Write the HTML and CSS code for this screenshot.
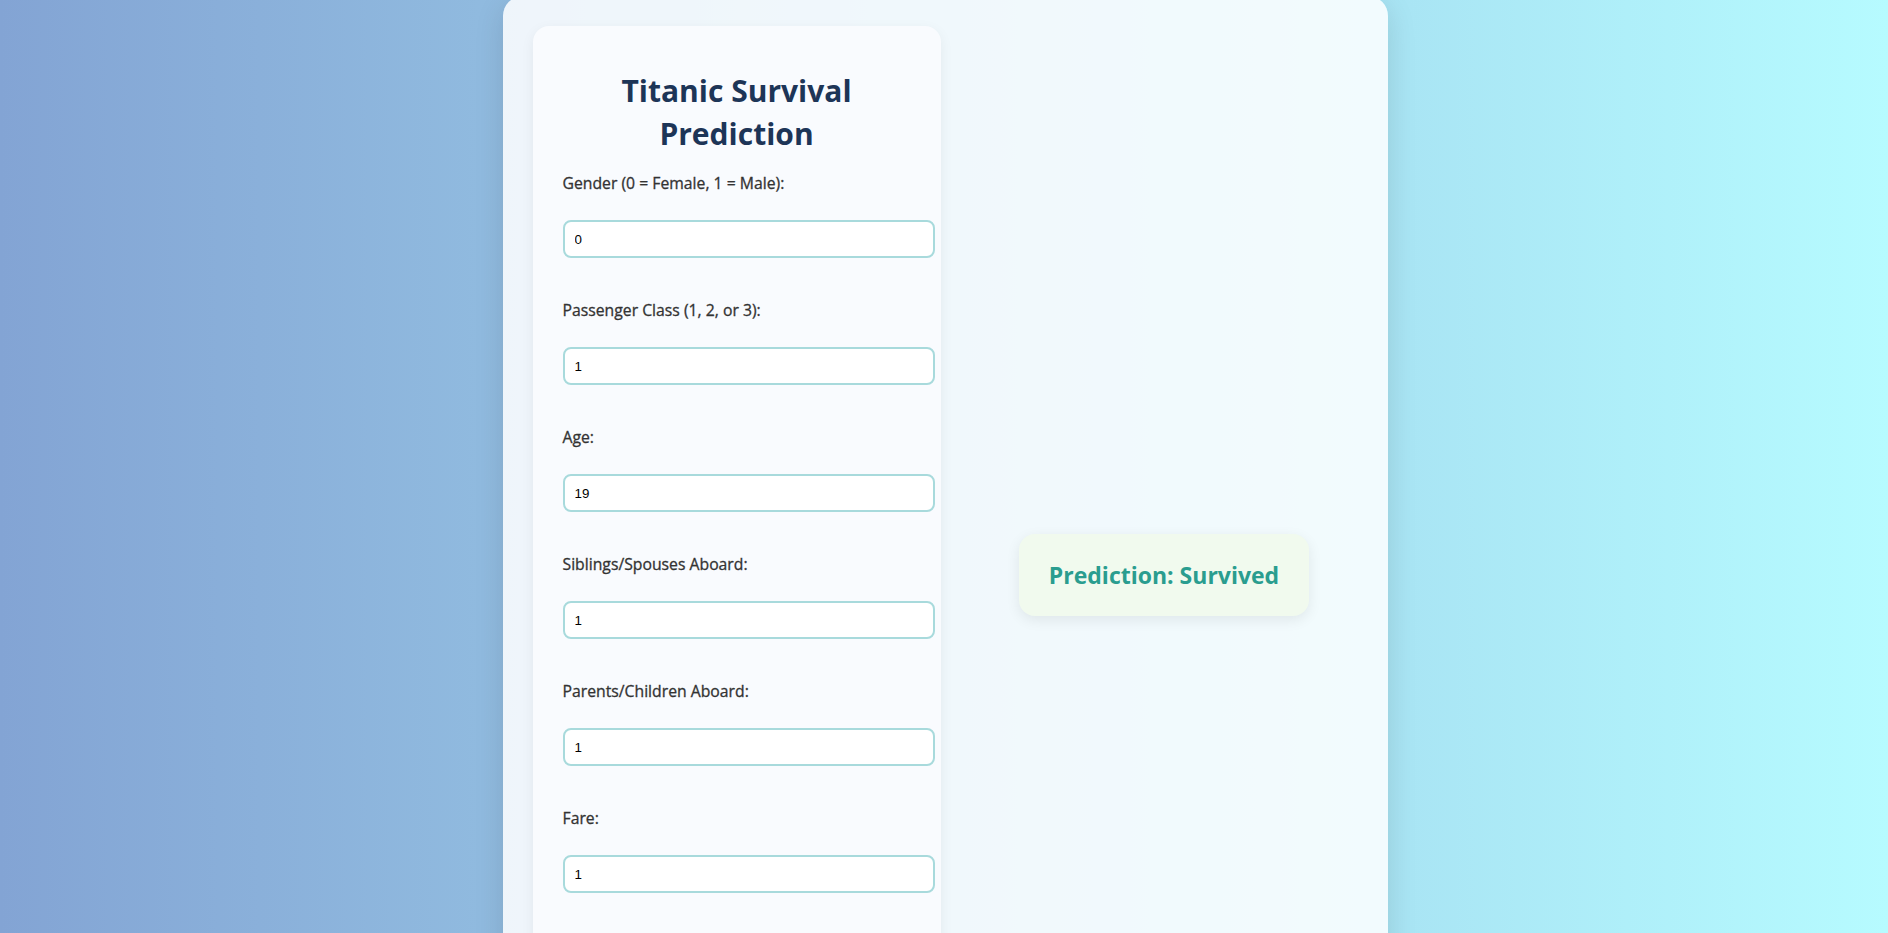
FILE: index.html
```html
<!DOCTYPE html>
<html lang="en">
<head>
<meta charset="utf-8">
<title>Titanic Survival Prediction</title>
<link rel="stylesheet" href="styles.css">
</head>
<body>
<div class="container">
  <form class="card">
    <h2 class="title">Titanic Survival Prediction</h2>
    <label class="label" for="sex">Gender (0 = Female, 1 = Male):</label>
    <input class="input" id="sex" type="text" value="0">
    <label class="label" for="pclass">Passenger Class (1, 2, or 3):</label>
    <input class="input" id="pclass" type="text" value="1">
    <label class="label" for="age">Age:</label>
    <input class="input" id="age" type="text" value="19">
    <label class="label" for="sibsp">Siblings/Spouses Aboard:</label>
    <input class="input" id="sibsp" type="text" value="1">
    <label class="label" for="parch">Parents/Children Aboard:</label>
    <input class="input" id="parch" type="text" value="1">
    <label class="label" for="fare">Fare:</label>
    <input class="input" id="fare" type="text" value="1">
  </form>
  <div class="result-col">
    <div class="result">
      <h3 class="result-text">Prediction: Survived</h3>
    </div>
  </div>
</div>
</body>
</html>
```

FILE: styles.css
```css
html, body {
  margin: 0;
  padding: 0;
}
body {
  min-height: 100vh;
  background: linear-gradient(to right, #83a4d4, #b6fbff);
  font-family: "Open Sans", "Noto Sans", sans-serif;
}
.container {
  width: 825px;
  margin: -4px auto 0;
  padding: 30px;
  transform: translateX(1px);
  background: rgba(255, 255, 255, 0.85);
  border-radius: 20px;
  box-shadow: 0 8px 30px rgba(0, 0, 0, 0.12);
  display: flex;
  gap: 30px;
  align-items: flex-start;
}
.card {
  width: 348px;
  flex: none;
  padding: 30px 30px 120px;
  background: #f9fbfe;
  border-radius: 16px;
  box-shadow: 0 4px 14px rgba(0, 0, 0, 0.06);
}
.title {
  margin: 13px 0 18px;
  font-size: 30px;
  line-height: 43px;
  font-weight: 700;
  color: #1d3557;
  text-align: center;
}
.label {
  display: block;
  font-size: 15.75px;
  line-height: 21px;
  font-weight: 400;
  color: #333;
  -webkit-text-stroke: 0.3px #333;
  margin-bottom: 26px;
}
.input {
  display: block;
  width: 100%;
  height: 16px;
  padding: 9px 10px;
  margin: 0 0 42px;
  border: 2px solid #a8dadc;
  border-radius: 8px;
  background: #fff;
  font-family: "Liberation Sans", Arial, sans-serif;
  font-size: 13.33px;
  color: #000;
  outline: none;
}
.result-col {
  flex: 1;
  display: flex;
  justify-content: center;
}
.result {
  margin-top: 508px;
  padding: 25px 30px;
  background: #f1faee;
  border-radius: 16px;
  box-shadow: 0 4px 14px rgba(0, 0, 0, 0.08);
}
.result-text {
  margin: 0;
  font-size: 23px;
  line-height: 32px;
  font-weight: 700;
  color: #2a9d8f;
}
```
